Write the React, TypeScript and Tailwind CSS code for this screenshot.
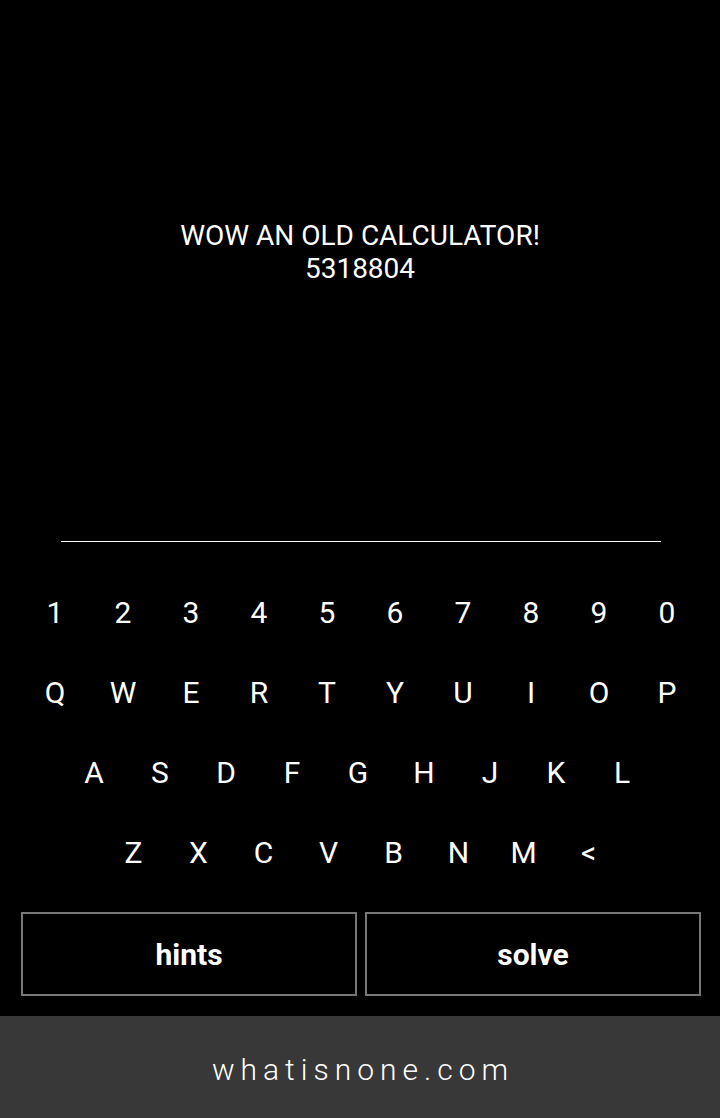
import React from "react";

const row1 = ["1", "2", "3", "4", "5", "6", "7", "8", "9", "0"];
const row2 = ["Q", "W", "E", "R", "T", "Y", "U", "I", "O", "P"];
const row3 = ["A", "S", "D", "F", "G", "H", "J", "K", "L"];
const row4 = ["Z", "X", "C", "V", "B", "N", "M", "<"];

export default function App() {
  return (
    <div className="flex h-[1118px] w-[720px] flex-col bg-black text-white" style={{ fontFamily: "Roboto, sans-serif" }}>
      <div className="flex h-[541px] flex-col items-center pt-[219px]">
        <div className="text-[28px] leading-[33px]">WOW AN OLD CALCULATOR!</div>
        <div className="text-[28px] leading-[33px]">5318804</div>
      </div>
      <div className="ml-[61px] mr-[59px] h-px bg-white" />
      <div className="flex flex-col pt-[30px]">
        <div className="flex h-[80px] items-center justify-center pl-[2px]">
          {row1.map((k) => (
            <button key={k} className="flex h-full w-[68px] items-center justify-center text-[30px] text-white">
              {k}
            </button>
          ))}
        </div>
        <div className="flex h-[80px] items-center justify-center pl-[2px]">
          {row2.map((k) => (
            <button key={k} className="flex h-full w-[68px] items-center justify-center text-[30px] text-white">
              {k}
            </button>
          ))}
        </div>
        <div className="flex h-[80px] items-center justify-center pr-[4px]">
          {row3.map((k) => (
            <button key={k} className="flex h-full w-[66px] items-center justify-center text-[30px] text-white">
              {k}
            </button>
          ))}
        </div>
        <div className="flex h-[80px] items-center justify-center pl-[2px]">
          {row4.map((k) => (
            <button key={k} className="flex h-full w-[65px] items-center justify-center text-[30px] text-white">
              {k}
            </button>
          ))}
        </div>
      </div>
      <div className="mt-[20px] flex gap-[8px] pl-[21px] pr-[19px]">
        <button className="flex h-[84px] flex-1 items-center justify-center border-2 border-[#777] text-[30px] font-bold">
          hints
        </button>
        <button className="flex h-[84px] flex-1 items-center justify-center border-2 border-[#777] text-[30px] font-bold">
          solve
        </button>
      </div>
      <div className="mt-auto flex h-[102px] items-center justify-center bg-[#383838] pl-[6px] pt-[4px]">
        <span className="text-[30px] font-light tracking-[6px]">whatisnone.com</span>
      </div>
    </div>
  );
}
